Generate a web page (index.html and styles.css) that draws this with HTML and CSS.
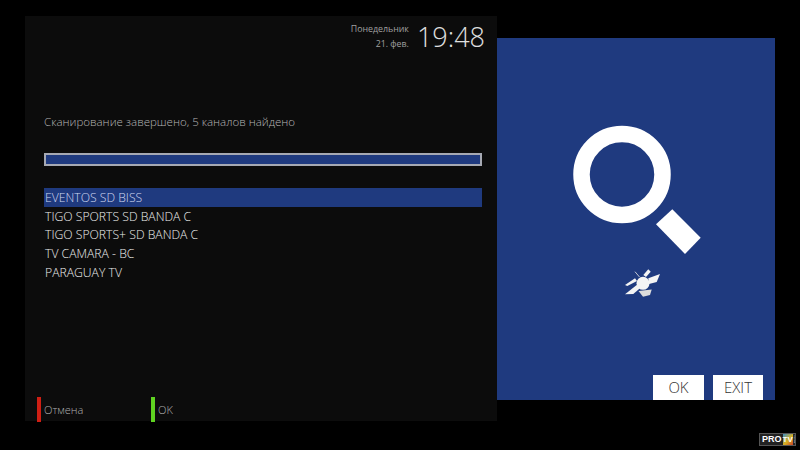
FILE: index.html
```html
<!DOCTYPE html>
<html lang="ru">
<head>
<meta charset="utf-8">
<title>Scan</title>
<link rel="stylesheet" href="styles.css">
</head>
<body>
<div class="screen">
  <main class="left">
    <header class="top">
      <div class="date"><div>Понедельник</div><div>21. фев.</div></div>
      <div class="clock">19:48</div>
    </header>
    <p class="msg">Сканирование завершено, 5 каналов найдено</p>
    <div class="bar"></div>
    <ul class="list">
      <li class="row sel">EVENTOS SD BISS</li>
      <li class="row">TIGO SPORTS SD BANDA C</li>
      <li class="row">TIGO SPORTS+ SD BANDA C</li>
      <li class="row">TV CAMARA - BC</li>
      <li class="row">PARAGUAY TV</li>
    </ul>
    <footer class="foot">
      <div class="key red">Отмена</div>
      <div class="key green">OK</div>
    </footer>
  </main>
  <aside class="right">
    <svg class="art" width="130" height="185" viewBox="0 0 130 185">
      <circle cx="50" cy="49.500" r="40.500" fill="none" stroke="#fff" stroke-width="16.500"/>
      <polygon points="100.300,84.300 128.700,112.700 113,129 84,99.300" fill="#fff"/>
      <g fill="#f4f4f4">
        <polygon points="53,160 63,153.300 65,156 55.300,161"/>
        <polygon points="71.300,150 76.300,144.300 78.700,146.700 74,152"/>
        <polygon points="76.300,153.300 88,149 84.700,157 77,159"/>
        <polygon points="53,169.300 64.700,160 68,163.300 61.300,169"/>
        <circle cx="71" cy="158.300" r="6.500"/>
        <polygon points="66.500,166 79.700,164.500 78,170 71,171.700" fill="#dcdcdc"/>
        <path d="M63 146.700 L67.500 152" stroke="#c4c8d4" stroke-width="1" fill="none"/>
      </g>
    </svg>
    <div class="btns">
      <div class="btn">OK</div>
      <div class="btn exit">EXIT</div>
    </div>
  </aside>
</div>
<div class="logo"><span class="pro">PRO</span><span class="tv">TV</span><span class="media">media</span></div>
</body>
</html>
```
FILE: styles.css
```css
* { box-sizing: border-box; }
html, body { margin: 0; height: 100%; }
body {
  width: 800px; height: 450px; overflow: hidden; background: #000;
  font-family: "Open Sans", sans-serif; font-weight: 300; color: #c8c8c8;
  position: relative;
}
.screen { display: flex; align-items: flex-start; padding: 16px 0 0 25px; }
.left {
  width: 472px; height: 405px; background: #0c0c0c;
  display: flex; flex-direction: column; padding-left: 19px;
}
.top { display: flex; justify-content: flex-end; align-items: flex-start; padding: 5px 12px 0 0; gap: 8px; height: 79px; }
.date { font-size: 8.800px; line-height: 15px; text-align: right; color: #a0a0a0; font-weight: 400; padding-top: 1px; }
.clock { font-size: 27px; line-height: 31px; color: #e0e0e0; }
.msg { margin: 20px 0 0; font-size: 11.500px; line-height: 14px; color: #b4b4b4; }
.bar { margin: 24px 0 0; width: 438px; height: 13px; background: #1f3a7f; border: 2px solid #a6a9b3; }
.list { list-style: none; margin: 22px 0 0; padding: 0; width: 438px; }
.row { height: 18.700px; line-height: 19px; font-size: 12.200px; padding-left: 1px; color: #ececec; font-weight: 300; }
.sel { background: #1f3a7f; color: #d0d8f0; }
.foot { margin: auto 0 -1px -7px; display: flex; height: 25px; }
.key { width: 114px; padding-left: 3px; border-left: 4px solid; font-size: 11px; line-height: 25px; color: #b0b0b0; }
.red { border-color: #cf1f14; }
.green { border-color: #5fd321; }
.right {
  width: 278px; height: 362px; margin-top: 22px; background: #1f3a7f;
  display: flex; flex-direction: column; padding: 87px 12px 0 75px;
}
.art { display: block; }
.btns { margin-top: auto; display: flex; justify-content: flex-end; gap: 9px; }
.btn { width: 51px; height: 25px; background: #fff; color: #333; font-size: 15px; line-height: 25px; text-align: center; }
.exit { width: 50px; }
.logo {
  position: absolute; left: 759px; top: 433px; width: 37px; height: 13px;
  background: #222; border: 1px solid #555; display: flex; align-items: center;
  font-family: "Liberation Sans", sans-serif; overflow: hidden;
}
.pro { color: #fff; font-weight: 700; font-size: 9px; line-height: 11px; padding-left: 2px; }
.tv { background: linear-gradient(135deg, #3a8fc8, #d8b020 55%, #c8402a); color: #fff; font-size: 8px; font-weight: 700; line-height: 11px; width: 10px; margin-left: 1px; text-align: center; }
.media { color: #ccc; font-size: 3px; writing-mode: vertical-rl; line-height: 4px; }
```
